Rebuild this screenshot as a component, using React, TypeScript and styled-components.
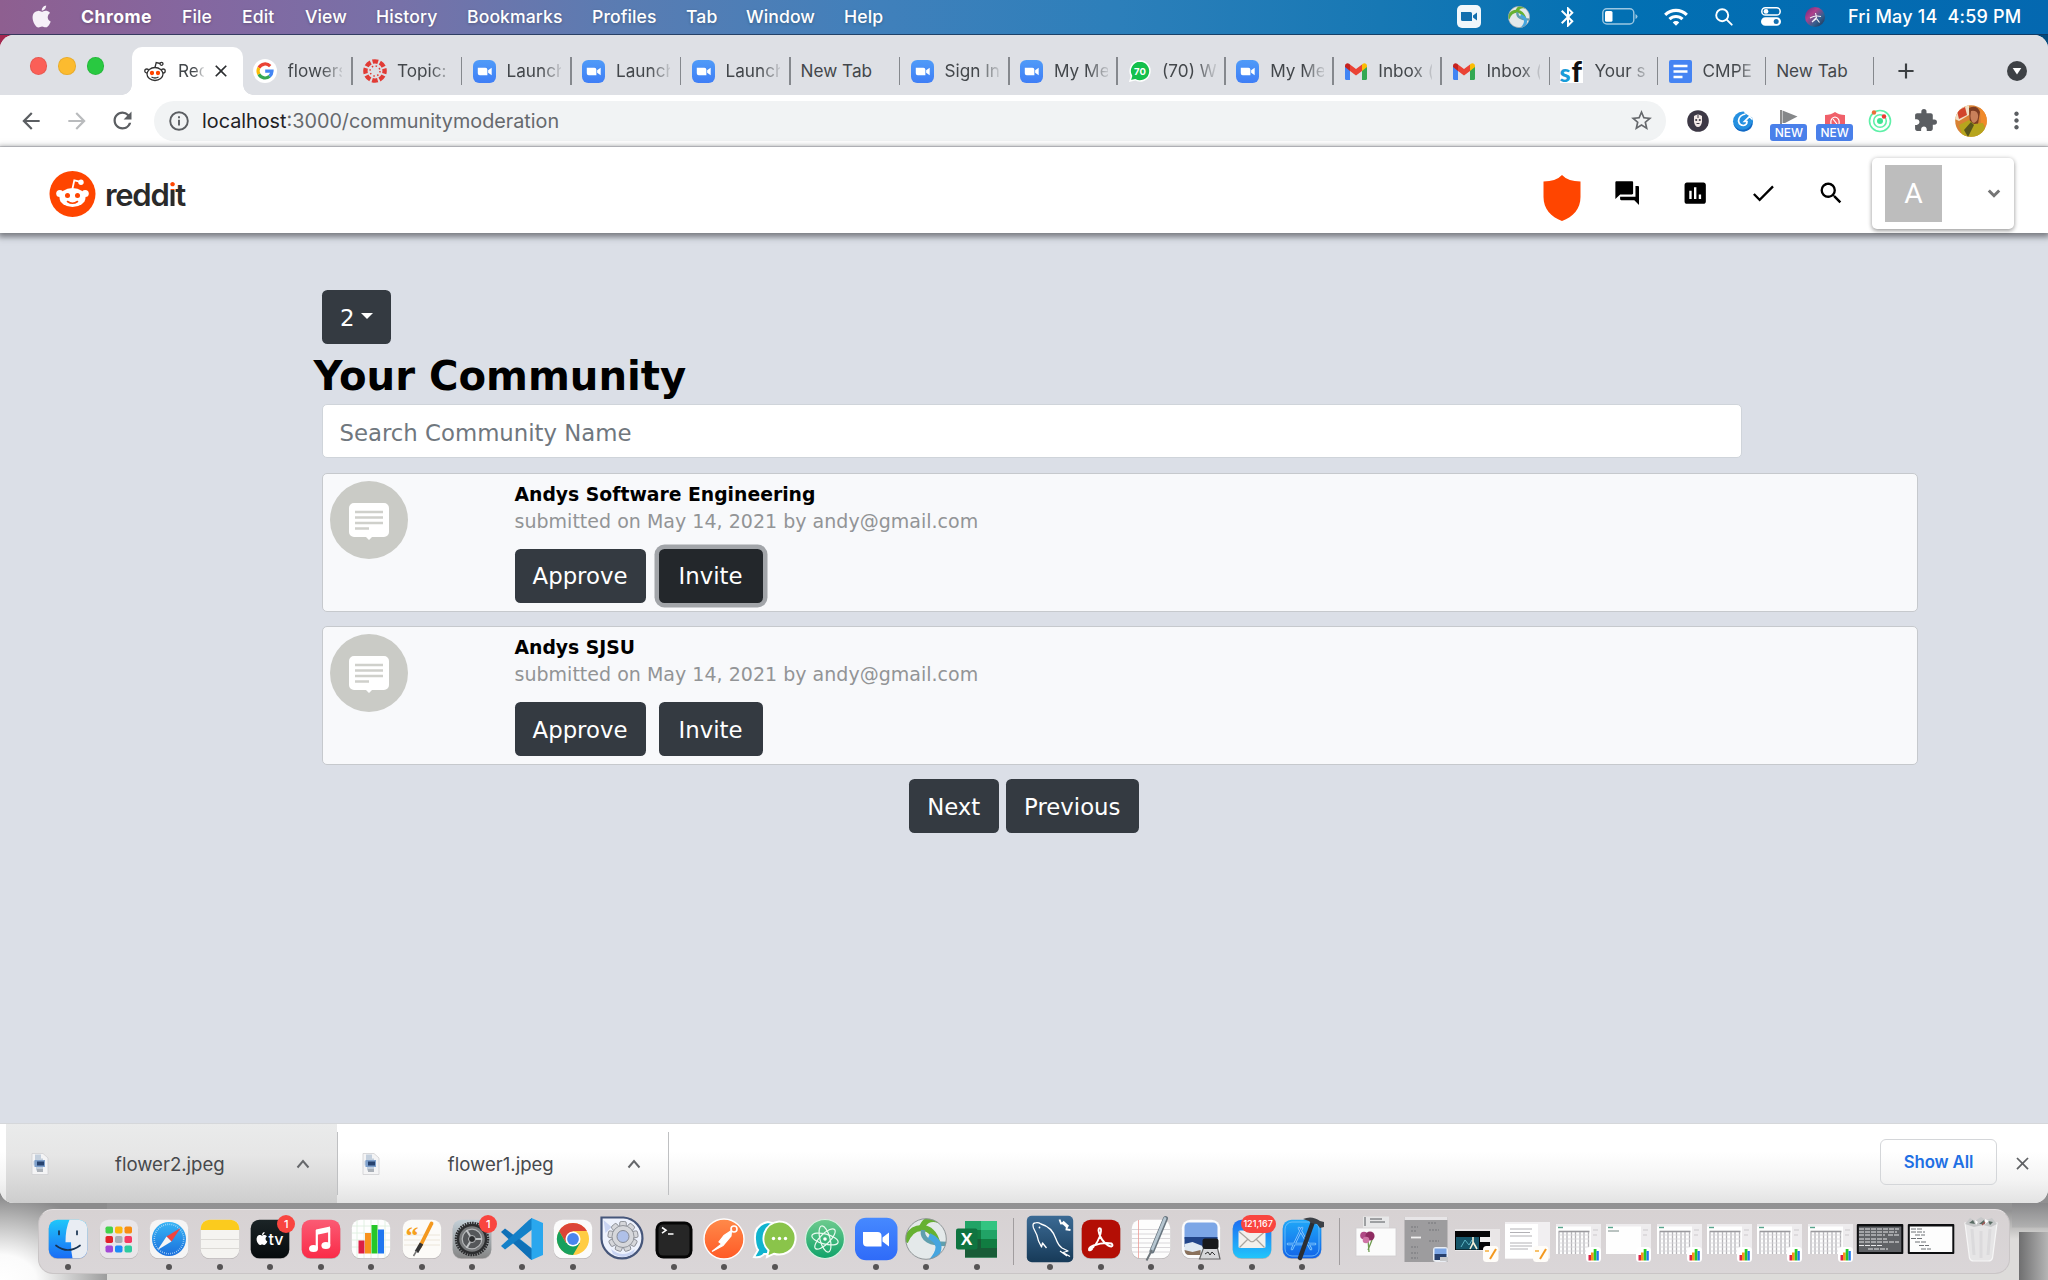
import React from "react";
import styled, { createGlobalStyle, css } from "styled-components";
import {
  MdQuestionAnswer,
  MdAssessment,
  MdCheck,
  MdSearch,
  MdArrowBack,
  MdArrowForward,
  MdRefresh,
  MdStarBorder,
  MdExtension,
  MdMoreVert,
  MdClose,
  MdAdd,
  MdBluetooth,
  MdWifi,
} from "react-icons/md";

const Global = createGlobalStyle`
  * { box-sizing: border-box; }
  body { margin: 0; overflow: hidden; }
  svg { display: block; flex: none; }
`;

const ui = `Inter, "Liberation Sans", sans-serif`;
const verdana = `Verdana, "DejaVu Sans", sans-serif`;

/* ---------- desktop ---------- */

const Desktop = styled.div`
  width: 2048px;
  height: 1280px;
  display: flex;
  flex-direction: column;
  isolation: isolate;
  font-family: ${ui};
  background:
    linear-gradient(90deg, #a3274f 0, #c02c58 300px, #2f4f74 420px, #0a5c92 1600px, #034a7c 100%) 0 0 / 100% 60px no-repeat,
    #969698;
`;

const MenuBar = styled.header`
  height: 35px;
  flex: none;
  display: flex;
  align-items: center;
  padding: 0 0 1px 30px;
  border-bottom: 1.5px solid rgba(20, 40, 70, 0.7);
  color: #fff;
  background: linear-gradient(90deg, #8e5f90 0, #8467a0 200px, #7771a8 400px, #5a7cb2 620px, #4080bb 880px, #2c7fba 1120px, #1778b4 1380px, #0270b3 1620px, #0468b0 2048px);
`;

const MenuItem = styled.span<{ $w: number; $bold?: boolean }>`
  width: ${(p) => p.$w}px;
  font-size: 17.6px;
  font-weight: ${(p) => (p.$bold ? 700 : 500)};
  letter-spacing: ${(p) => (p.$bold ? 0.5 : 0.1)}px;
  white-space: nowrap;
  text-shadow: 0 1px 3px rgba(0, 0, 0, 0.25);
`;

const Extras = styled.div`
  margin-left: auto;
  display: flex;
  align-items: center;
`;

const Slot = styled.span<{ $w: number }>`
  width: ${(p) => p.$w}px;
  flex: none;
  display: flex;
  justify-content: center;
  align-items: center;
`;

const Clock = styled.span`
  width: 217px;
  padding-left: 17px;
  font-size: 18px;
  font-weight: 500;
  letter-spacing: 0.2px;
  white-space: pre;
`;

/* ---------- browser ---------- */

const Window = styled.section`
  height: 1168px;
  flex: none;
  display: flex;
  flex-direction: column;
  border-radius: 14px;
  overflow: hidden;
  background: #fff;
`;

const TabStrip = styled.div`
  height: 60px;
  flex: none;
  display: flex;
  align-items: flex-end;
  background: #dee0e5;
`;

const Lights = styled.div`
  width: 132px;
  flex: none;
  height: 60px;
  padding: 2px 0 0 29.5px;
  display: flex;
  align-items: center;
  gap: 11.4px;
`;

const Light = styled.i<{ $c: string }>`
  width: 17.4px;
  height: 17.4px;
  border-radius: 50%;
  background: ${(p) => p.$c};
  box-shadow: inset 0 0 0 1px rgba(0, 0, 0, 0.08);
`;

const tabBase = css`
  height: 48px;
  flex: none;
  display: flex;
  align-items: center;
  font-size: 17.2px;
  color: #43474b;
`;

const ActiveTab = styled.div`
  ${tabBase}
  width: 111px;
  padding-left: 12px;
  background: #fff;
  border-radius: 10px 10px 0 0;
  position: relative;
  &::before,
  &::after {
    content: "";
    position: absolute;
    bottom: 0;
    width: 10px;
    height: 10px;
  }
  &::before {
    left: -10px;
    background: radial-gradient(circle at 0 0, transparent 9.5px, #fff 10px);
  }
  &::after {
    right: -10px;
    background: radial-gradient(circle at 100% 0, transparent 9.5px, #fff 10px);
  }
`;

const Tab = styled.div<{ $w: number }>`
  ${tabBase}
  width: ${(p) => p.$w}px;
  padding-left: 10px;
`;

const TabDivider = styled.i`
  width: 1.4px;
  height: 28px;
  margin-left: auto;
  background: #85888d;
`;

const TabTitle = styled.span<{ $w: number; $gap?: number; $fade?: boolean }>`
  width: ${(p) => p.$w}px;
  margin-left: ${(p) => p.$gap ?? 0}px;
  padding-bottom: 1px;
  overflow: hidden;
  white-space: nowrap;
  ${(p) =>
    p.$fade &&
    css`
      mask-image: linear-gradient(90deg, #000 62%, rgba(0, 0, 0, 0.15) 100%);
    `}
`;

const Toolbar = styled.div`
  height: 52px;
  flex: none;
  display: flex;
  align-items: center;
  padding-left: 8px;
  border-bottom: 1.4px solid #d9dbde;
  color: #5b5e62;
`;

const Omnibox = styled.div`
  width: 1512px;
  height: 40px;
  margin: 0 9px 0 9px;
  padding: 0 12px 0 15px;
  display: flex;
  align-items: center;
  border-radius: 20px;
  background: #f1f3f4;
  font-size: 19.8px;
  letter-spacing: 0;
  color: #66696d;
`;

const Host = styled.span`
  margin-left: 13px;
  color: #1f2124;
`;

const UrlPath = styled.span`
  flex: 1;
`;

const ExtStack = styled.span`
  height: 40px;
  display: flex;
  flex-direction: column;
  align-items: center;
  justify-content: flex-end;
`;

const NewBadge = styled.b`
  width: 37px;
  height: 17px;
  border-radius: 3px;
  background: #4a80ea;
  color: #fff;
  font-size: 12px;
  font-weight: 500;
  line-height: 18px;
  text-align: center;
`;

/* ---------- page ---------- */

const Page = styled.main`
  flex: 1;
  display: flex;
  flex-direction: column;
  background: #dbdfe7;
`;

const SiteHeader = styled.div`
  height: 86px;
  flex: none;
  display: flex;
  align-items: center;
  padding: 6px 34px 0 49px;
  background: #fff;
  box-shadow: 0 2px 6px 2px rgba(60, 62, 66, 0.62);
  z-index: 1;
`;

const Wordmark = styled.span`
  margin: 4px 0 0 9px;
  font-size: 31px;
  line-height: 38px;
  font-weight: 600;
  letter-spacing: -1.3px;
  color: #2a2a2a;
`;

const DottedI = styled.span`
  color: transparent;
  background: linear-gradient(#ff4500 38%, #2a2a2a 38%);
  background-clip: text;
  -webkit-background-clip: text;
`;

const HeaderIcons = styled.div`
  margin-left: auto;
  display: flex;
  align-items: center;
  color: #000;
`;

const ShieldSlot = styled(Slot)`
  padding-top: 9px;
`;

const Profile = styled.div`
  width: 142px;
  height: 71px;
  margin-left: 7px;
  padding: 0 13px 0 13px;
  display: flex;
  align-items: center;
  justify-content: space-between;
  border-radius: 5px;
  background: #fff;
  box-shadow: 0 2px 4px rgba(0, 0, 0, 0.32), 0 0 5px rgba(0, 0, 0, 0.14);
`;

const Initial = styled.span`
  width: 57px;
  height: 57px;
  display: grid;
  place-items: center;
  background: #bdbdbd;
  color: #fff;
  font: 400 28.4px Roboto, sans-serif;
`;

const Content = styled.div`
  flex: 1;
  display: flex;
  flex-direction: column;
  padding: 57px 130px 0 321.5px;
  font-family: ${verdana};
`;

const Button = styled.button<{ $w: number; $focus?: boolean }>`
  width: ${(p) => p.$w}px;
  height: 54px;
  padding: 1px 0 0;
  display: flex;
  align-items: center;
  justify-content: center;
  gap: 6px;
  border: 0;
  border-radius: 5.5px;
  background: ${(p) => (p.$focus ? "#23272b" : "#343a41")};
  box-shadow: ${(p) => (p.$focus ? "0 0 0 4.5px #a2a5a9" : "none")};
  color: #fff;
  font: 400 22.8px ${verdana};
`;

const Caret = styled.i`
  margin-top: -4px;
  border: 6.5px solid transparent;
  border-top-color: #fff;
  border-bottom: 0;
`;

const Heading = styled.h3`
  margin: 9px 0 5px -8px;
  font-size: 40.2px;
  line-height: 46px;
  font-weight: 700;
  color: #000;
`;

const SearchInput = styled.input`
  width: 1420px;
  height: 54px;
  flex: none;
  padding: 3px 16px 0 17px;
  border: 1.4px solid #cfd4da;
  border-radius: 5px;
  background: #fff;
  font: 400 22.8px ${verdana};
  &::placeholder {
    color: #70777e;
    opacity: 1;
  }
`;

const Card = styled.article`
  height: 139px;
  flex: none;
  margin-top: 14.5px;
  padding: 7px 0 0 7px;
  display: flex;
  border: 1.5px solid #c6c9cd;
  border-radius: 5px;
  background: #f8f9fb;
`;

const CardBody = styled.div`
  margin-left: 107px;
`;

const CardTitle = styled.div`
  height: 27px;
  line-height: 28px;
  font-size: 18.8px;
  font-weight: 700;
  color: #000;
`;

const CardMeta = styled.div`
  height: 27px;
  line-height: 26px;
  font-size: 19px;
  letter-spacing: 0.02px;
  color: #929496;
`;

const Actions = styled.div<{ $gap: number }>`
  margin-top: 14px;
  display: flex;
  gap: ${(p) => p.$gap}px;
`;

const Pager = styled.div`
  margin: 14px 0 0 587.5px;
  display: flex;
  gap: 7px;
`;

/* ---------- downloads ---------- */

const Shelf = styled.footer`
  height: 80px;
  flex: none;
  display: flex;
  align-items: center;
  padding-left: 6px;
  border-top: 1px solid #d5d7da;
  background: linear-gradient(#fff 0, #fff 35%, #f4f4f4 70%, #e3e3e3 100%);
`;

const Download = styled.div<{ $active?: boolean }>`
  width: 330.8px;
  height: 80px;
  padding: 0 27px 0 25px;
  display: flex;
  align-items: center;
  font-size: 18.6px;
  color: #47494c;
  background: ${(p) => (p.$active ? "linear-gradient(#eaebeb, #e6e6e6 40%, #cdcdcd)" : "none")};
`;

const FileName = styled.span<{ $inset: number }>`
  flex: 1;
  margin-left: ${(p) => p.$inset}px;
`;

const ShelfDivider = styled.i`
  width: 1.2px;
  height: 63px;
  margin-right: -1.2px;
  background: #bfc0c2;
`;

const ShowAll = styled.button`
  width: 117px;
  height: 46px;
  margin: -4px 13px 0 auto;
  padding: 0;
  border: 1.4px solid #d4d6d9;
  border-radius: 6px;
  background: transparent;
  color: #1f70e4;
  font: 600 16.8px ${ui};
  letter-spacing: -0.1px;
`;

/* ---------- dock ---------- */

const Under = styled.div`
  flex: 1;
  display: flex;
  align-items: flex-start;
  margin-top: -14px;
  padding: 20px 38px 0;
  position: relative;
  z-index: -1;
  background:
    linear-gradient(#88888a, #b0b0b0 24px, transparent 25px) 2012px 14px / 36px 30px no-repeat,
    linear-gradient(90deg, #6f6f70, #b5b5b5) 100% 100% / 29px 48px no-repeat,
    radial-gradient(120px 84px at 0 100%, #fff 0, #fbfbfb 30%, #b4b4b4 75%, #8b8b8c 100%) 0 0 / 107px 100% no-repeat,
    linear-gradient(#8d8d8f 0, #939394 22px, #dddcda 50px);
`;

const Dock = styled.nav`
  width: 1972px;
  height: 65px;
  flex: none;
  padding-left: 4px;
  display: flex;
  border-radius: 15px;
  border: 1px solid #c9c5c6;
  border-top-color: #e6e2e3;
  background: linear-gradient(#d7d2d3, #dad6d8);
`;

const DockItem = styled.div`
  width: 50.47px;
  flex: none;
  padding-top: 4.5px;
  display: flex;
  flex-direction: column;
  align-items: center;
  position: relative;
`;

const RunningDot = styled.i`
  width: 6px;
  height: 6px;
  margin-top: 1px;
  border-radius: 50%;
  background: #565455;
`;

const DockDivider = styled.i`
  width: 1.4px;
  flex: none;
  height: 47px;
  margin: 8px 10.5px 0 11px;
  background: #a19d9f;
`;

const Badge = styled.b<{ $wide?: boolean }>`
  position: absolute;
  top: 5px;
  right: ${(p) => (p.$wide ? 1.5 : 0)}px;
  width: ${(p) => (p.$wide ? 35 : 18)}px;
  height: 18px;
  border-radius: 9px;
  background: #f9453f;
  color: #fff;
  font-size: ${(p) => (p.$wide ? 9 : 11)}px;
  font-weight: 500;
  line-height: 18px;
  text-align: center;
`;

/* ---------- small drawings ---------- */

const ZoomMark = ({ size = 23 }: { size?: number }) => (
  <svg width={size} height={size} viewBox="0 0 24 24">
    <defs>
      <linearGradient id="zm" x1="0" y1="0" x2="0" y2="1">
        <stop offset="0" stopColor="#4f9bf8" />
        <stop offset="1" stopColor="#3f7ef6" />
      </linearGradient>
    </defs>
    <rect width="24" height="24" rx="6.5" fill="url(#zm)" />
    <path d="M5 8.2h8a2 2 0 0 1 2 2v5.600h-8a2 2 0 0 1-2-2zM15.800 10.800l3.700-2.600v7.600l-3.700-2.600z" fill="#fff" />
  </svg>
);

const GoogleG = () => (
  <svg width="24" height="24" viewBox="0 0 24 24">
    <circle cx="12" cy="12" r="12" fill="#fff" />
    <g fill="none" strokeWidth="3.200">
      <path d="M17.200 7.200A7 7 0 0 0 5.900 8.700" stroke="#ea4335" />
      <path d="M5.900 8.700a7 7 0 0 0 0 6.600" stroke="#fbbc05" />
      <path d="M5.900 15.300a7 7 0 0 0 10.700 2" stroke="#34a853" />
      <path d="M16.600 17.300A7 7 0 0 0 19 12.200h-6.800" stroke="#4285f4" />
    </g>
  </svg>
);

const Canvas = () => (
  <svg width="24" height="24" viewBox="0 0 24 24">
    <circle cx="12" cy="12" r="9.600" fill="none" stroke="#e13b35" strokeWidth="4.400" strokeDasharray="5.600 1.940" strokeDashoffset="2.800" />
    <circle cx="12" cy="12" r="5" fill="none" stroke="#e13b35" strokeWidth="1.500" strokeDasharray="1.500 2.430" />
  </svg>
);

const WhatsApp = () => (
  <svg width="22" height="22" viewBox="0 0 22 22">
    <path d="M11 1a10 10 0 1 1-5 18.700L1 21l1.500-5A10 10 0 0 1 11 1z" fill="#14c04c" stroke="#fff" strokeWidth="1.500" />
    <text x="11" y="14.500" fontSize="9.500" fontWeight="700" fill="#fff" textAnchor="middle" fontFamily="Inter">70</text>
  </svg>
);

const Gmail = () => (
  <svg width="22" height="17" viewBox="0 0 22 17">
    <path d="M0 3v12.500A1.500 1.500 0 0 0 1.500 17H5V7z" fill="#4285f4" />
    <path d="M22 3v12.500a1.500 1.500 0 0 1-1.500 1.500H17V7z" fill="#34a853" />
    <path d="M5 1.500L11 6l6-4.500V8l-6 4.500L5 8z" fill="#ea4335" />
    <path d="M0 3c0-2.500 2.500-3.500 4.200-2.200L5 1.500V8L0 4z" fill="#c5221f" />
    <path d="M22 3c0-2.500-2.500-3.500-4.200-2.200L17 1.500V8l5-4z" fill="#fbbc04" />
  </svg>
);

const SfMark = () => (
  <svg width="23" height="23" viewBox="0 0 23 23">
    <rect width="23" height="23" fill="#fff" />
    <text x="-0.500" y="22" fontFamily="Lato" fontWeight="900" fontSize="25" fill="#1a9cd8">s</text>
    <text x="11.500" y="22" fontFamily="Lato" fontWeight="900" fontSize="29" fill="#111">f</text>
  </svg>
);

const DocsMark = () => (
  <svg width="23" height="23" viewBox="0 0 23 23">
    <rect width="23" height="23" rx="2" fill="#4584f3" />
    <path d="M4.500 6h14M4.500 11.500h14M4.500 17h9" stroke="#fff" strokeWidth="2.600" />
  </svg>
);

const SnooTab = () => (
  <svg width="22" height="22" viewBox="0 0 22 22" fill="none" stroke="#333" strokeWidth="1.300">
    <path d="M11 7.500l1.200-5 4 1" />
    <circle cx="17.500" cy="3.800" r="1.500" />
    <circle cx="2.800" cy="11" r="2" />
    <circle cx="19.200" cy="11" r="2" />
    <ellipse cx="11" cy="14" rx="8" ry="6.500" fill="#fff" />
    <circle cx="8" cy="13" r="1.500" fill="#ff4500" stroke="#ff4500" />
    <circle cx="14" cy="13" r="1.500" fill="#ff4500" stroke="#ff4500" />
    <path d="M7.500 17q3.500 2 7 0" />
  </svg>
);

const RedditLogo = () => (
  <svg width="47" height="48" viewBox="0 0 47 48">
    <circle cx="23.500" cy="25" r="23" fill="#ff4500" />
    <g fill="#fff">
      <ellipse cx="23.500" cy="28.500" rx="13" ry="9.500" />
      <circle cx="10.800" cy="24.500" r="3.600" />
      <circle cx="36.200" cy="24.500" r="3.600" />
      <circle cx="32" cy="13.300" r="2.700" />
      <path d="M23.500 19.500l1.800-8.200 6.500 1.600" fill="none" stroke="#fff" strokeWidth="1.800" />
    </g>
    <circle cx="18.500" cy="26.500" r="2.500" fill="#ff4500" />
    <circle cx="28.500" cy="26.500" r="2.500" fill="#ff4500" />
    <path d="M18.500 32.500q5 3.600 10 0" fill="none" stroke="#ff4500" strokeWidth="1.600" strokeLinecap="round" />
  </svg>
);

const Shield = () => (
  <svg width="38" height="46" viewBox="0 0 38 46">
    <path d="M19 0Q25 6.500 37.500 6.500V22C37.500 34 30 42 19 46 8 42 .5 34 .5 22V6.500Q13 6.500 19 0z" fill="#ff4500" />
  </svg>
);

const InfoMark = () => (
  <svg width="20" height="20" viewBox="0 0 20 20" fill="none" stroke="#5b5e62" strokeWidth="1.900">
    <circle cx="10" cy="10" r="8.800" />
    <path d="M10 8.800v5.700M10 5.300v2" />
  </svg>
);

const Chevron = () => (
  <svg width="14" height="10" viewBox="0 0 14 10">
    <path d="M1.500 8.500L7 2l5.500 6.500" fill="none" stroke="#66686b" strokeWidth="2" />
  </svg>
);

const ProfileArrow = () => (
  <svg width="14" height="9" viewBox="0 0 14 9">
    <path d="M1.800 1.500L7 6.700l5.200-5.200" fill="none" stroke="#757575" strokeWidth="3" />
  </svg>
);

const JpegFile = () => (
  <svg width="18" height="22" viewBox="0 0 18 22">
    <path d="M1 .5h11l5 4.500v16.500H1z" fill="#f4f4f5" stroke="#cfcfd2" strokeWidth=".8" />
    <path d="M4 1.500h6v4h2v12H5v-5H2.500V8H4z" fill="#c3cfdd" />
    <rect x="3.500" y="7" width="10.500" height="7" fill="#7ea0cc" />
    <rect x="6" y="8.500" width="7" height="4" fill="#27436f" />
    <path d="M6 16h6v3H6z" fill="#aab0b8" />
  </svg>
);

const CommunityAvatar = () => (
  <svg width="78" height="78" viewBox="0 0 78 78">
    <circle cx="39" cy="39" r="39" fill="#cacbc6" />
    <path d="M24 22h30a5 5 0 0 1 5 5v24a5 5 0 0 1-5 5H42l-3 3-3-3H24a5 5 0 0 1-5-5V27a5 5 0 0 1 5-5z" fill="#fff" />
    <path d="M25 31h28M25 36.500h28M25 42h28M25 47.500h14" stroke="#cfd0cb" strokeWidth="2.400" />
  </svg>
);

const CameraExtra = () => (
  <svg width="24" height="23" viewBox="0 0 24 23">
    <rect width="24" height="23" rx="5" fill="#f1f7fb" />
    <path d="M4 7h9.500a1.500 1.500 0 0 1 1.500 1.500V16H5.500A1.500 1.500 0 0 1 4 14.500zM16 10.500l4-3v8l-4-3z" fill="#136fae" />
  </svg>
);

const Swirl = ({ size = 22 }: { size?: number }) => (
  <svg width={size} height={size} viewBox="0 0 42 42">
    <defs>
      <clipPath id="swc"><circle cx="21" cy="21" r="20.500" /></clipPath>
    </defs>
    <circle cx="21" cy="21" r="20.500" fill="#e4e9ea" />
    <g clipPath="url(#swc)" fill="none">
      <path d="M0 24Q6 9 18 10q10 1 14 14" stroke="#66b132" strokeWidth="6" />
      <path d="M16 12Q20-2 34 2" stroke="#66b132" strokeWidth="6" />
      <path d="M18 12q-2 14 24 14" stroke="#5f9fae" strokeWidth="4.500" />
      <path d="M24 18q18 8 2 26" stroke="#45a5df" strokeWidth="6" />
    </g>
    <circle cx="21" cy="21" r="20.300" fill="none" stroke="#8f9496" strokeWidth="1" />
  </svg>
);

const Battery = () => (
  <svg width="36" height="17" viewBox="0 0 36 17">
    <rect x=".8" y=".8" width="31" height="15.200" rx="4" fill="none" stroke="#9cc7e2" strokeWidth="1.400" />
    <rect x="3" y="3" width="7.500" height="10.800" rx="1.500" fill="#fff" />
    <path d="M33.500 6v5q2-1 2-2.500T33.500 6z" fill="#9cc7e2" />
  </svg>
);

const SearchExtra = () => (
  <svg width="18" height="18" viewBox="0 0 18 18" fill="none" stroke="#fff" strokeWidth="1.900" strokeLinecap="round">
    <circle cx="7.200" cy="7.200" r="6" />
    <path d="M11.700 11.700l5 5" />
  </svg>
);

const ControlCenter = () => (
  <svg width="20" height="19" viewBox="0 0 20 19">
    <rect x=".8" y=".8" width="18.400" height="7.200" rx="3.600" fill="none" stroke="#fff" strokeWidth="1.500" />
    <circle cx="5" cy="4.400" r="2.400" fill="#fff" />
    <rect y="10.200" width="20" height="8.600" rx="4.300" fill="#fff" />
    <circle cx="15.200" cy="14.500" r="2.500" fill="#1470b0" />
  </svg>
);

const Siri = () => (
  <svg width="20" height="20" viewBox="0 0 20 20">
    <defs>
      <linearGradient id="siri" x1="0" y1="0" x2="1" y2="1">
        <stop offset="0" stopColor="#5a2a80" />
        <stop offset=".35" stopColor="#b0408c" />
        <stop offset=".65" stopColor="#35608f" />
        <stop offset="1" stopColor="#1d2a4a" />
      </linearGradient>
    </defs>
    <circle cx="10" cy="10" r="10" fill="url(#siri)" />
    <path d="M5 11q5-3 11-1.500M10.500 6l1 4.500L7 15l4.500-3.500 3 4" stroke="#fff" strokeWidth="1.100" fill="none" opacity=".9" />
  </svg>
);

const ApplePath = "M17 12.700c0-2.700 2.200-4 2.300-4.100-1.300-1.800-3.200-2.100-3.900-2.100-1.700-.2-3.200 1-4.100 1-.8 0-2.100-1-3.500-.900-1.800 0-3.400 1-4.400 2.600-1.900 3.200-.5 8 1.300 10.600.9 1.300 2 2.700 3.400 2.700 1.400-.1 1.900-.9 3.500-.9s2.100.9 3.500.800c1.500 0 2.400-1.300 3.300-2.600 1-1.500 1.500-2.900 1.500-3-.1 0-2.900-1.100-2.900-4.100zM14.400 4.800c.7-.9 1.200-2.100 1.100-3.300-1.100 0-2.400.7-3.100 1.600-.7.800-1.300 2-1.100 3.200 1.200.1 2.400-.6 3.100-1.500z";

const AppleMark = () => (
  <svg width="25" height="25" viewBox="0 0 24 24" fill="#f6f0f8">
    <path d={ApplePath} />
  </svg>
);

const StripMenu = () => (
  <svg width="20" height="20" viewBox="0 0 20 20">
    <circle cx="10" cy="10" r="10" fill="#3e4145" />
    <path d="M5.700 7h8.600L10 13.500z" fill="#fff" />
  </svg>
);

const MaskExt = () => (
  <svg width="22" height="22" viewBox="0 0 22 22">
    <circle cx="11" cy="11" r="10.800" fill="#3d3845" />
    <path d="M7 6q4-3 8 0v6q-1 5-4 5t-4-5z" fill="#f3e9e6" />
    <circle cx="9.200" cy="10" r="1.100" fill="#3d3845" />
    <circle cx="12.800" cy="10" r="1.100" fill="#3d3845" />
    <path d="M9.500 13.500h3M11 5v3" stroke="#3d3845" strokeWidth="1" />
  </svg>
);

const WaveExt = () => (
  <svg width="22" height="22" viewBox="0 0 22 22">
    <circle cx="11" cy="11.500" r="10" fill="#2590e0" />
    <path d="M12 0l10 0v8l-4-1.500L12.500 3z" fill="#fff" />
    <path d="M1.500 14q5 8 13 5 5-3 6-8 1 9-8 10.500Q4 22 1.500 14z" fill="#1468c4" />
    <path d="M13.500 4Q7 5 6.500 11q1 4.500 5 4.500 3.500-.5 3.500-4h-2.500l5-5 3 3" fill="none" stroke="#fff" strokeWidth="1.700" />
  </svg>
);

const PlayExt = () => (
  <svg width="18" height="15" viewBox="0 0 18 15">
    <path d="M1 1v14" stroke="#666" strokeWidth="1.500" />
    <path d="M2.500 1.500L17.500 7.500 5 14h-2.500z" fill="#858789" />
  </svg>
);

const HexExt = () => (
  <svg width="20" height="12" viewBox="0 0 20 12">
    <path d="M0 3Q6 3 10 0q4 3 10 3v9H0z" fill="#f0606a" />
    <path d="M6 12q-1-6 4-7 5 1 4 7M8 7l4 5" stroke="#fff" strokeWidth="1.200" fill="none" />
  </svg>
);

const OrbitExt = () => (
  <svg width="24" height="24" viewBox="0 0 24 24">
    <circle cx="12" cy="12" r="10.500" fill="none" stroke="#5ff0a8" strokeWidth="1.600" />
    <circle cx="12" cy="12" r="6.300" fill="none" stroke="#5ff0a8" strokeWidth="1.600" />
    <circle cx="12" cy="12" r="3" fill="#3fe493" />
    <circle cx="6" cy="3.500" r="2.200" fill="#e8703a" />
    <circle cx="16" cy="7.500" r="2.200" fill="#ee3a34" />
  </svg>
);

const Portrait = () => (
  <svg width="32" height="32" viewBox="0 0 32 32">
    <defs><clipPath id="por"><circle cx="16" cy="16" r="15.800" /></clipPath></defs>
    <g clipPath="url(#por)">
      <rect width="32" height="32" fill="#d98234" />
      <path d="M0 0h14v10L4 16 0 14z" fill="#f1dfc4" />
      <path d="M2 6l8-4 2 8-8 4z" fill="#d2452b" />
      <path d="M14 3q8-4 11 4l-2 12H15z" fill="#7d3c22" />
      <path d="M16 6q6-1 7 4t-4 8q-5-2-3-12z" fill="#c9805a" />
      <path d="M25 2h7v20l-6-4z" fill="#f08a2a" />
      <path d="M4 20l10-5 5 4 9-1 3 8-10 7H8z" fill="#b7a51d" />
      <path d="M9 25l7-8 3 3-6 12z" fill="#59561c" />
    </g>
  </svg>
);

/* ---------- dock drawings: every icon sits on a 48 unit canvas ---------- */

const Tile = ({ fill, children }: { fill: string; children?: React.ReactNode }) => (
  <svg width="48" height="48" viewBox="0 0 48 48">
    <rect x="4.700" y="5.400" width="38.600" height="38.600" rx="8.800" fill="#000" opacity=".16" />
    <rect x="4.700" y="4.700" width="38.600" height="38.600" rx="8.800" fill={fill} />
    {children}
  </svg>
);

const Free = ({ children }: { children: React.ReactNode }) => (
  <svg width="48" height="48" viewBox="0 0 48 48">{children}</svg>
);

const Paints = () => (
  <svg width="0" height="0">
    <defs>
      {[
        ["gFinder", "#1fc7fa", "#1a6cf6"],
        ["gSafari", "#35b4f5", "#1b6fdc"],
        ["gMusic", "#fb5b74", "#fa2b48"],
        ["gTv", "#1b2426", "#060b0d"],
        ["gPostman", "#ff8a4a", "#ff5a26"],
        ["gAtom", "#6ecb8e", "#10a36a"],
        ["gZoom", "#4689ff", "#2f6bf8"],
        ["gSql", "#3b6a94", "#173a58"],
        ["gMail", "#1c6df2", "#22c6fb"],
        ["gXcode", "#1fa8f8", "#1263e8"],
        ["gGear", "#c4d0d8", "#858585"],
      ].map(([id, a, b]) => (
        <linearGradient key={id} id={id} x1="0" y1="0" x2="0" y2="1">
          <stop offset="0" stopColor={a} />
          <stop offset="1" stopColor={b} />
        </linearGradient>
      ))}
    </defs>
  </svg>
);

const Finder = () => (
  <Tile fill="url(#gFinder)">
    <path d="M25.500 4.700h9a8.800 8.800 0 0 1 8.800 8.800v21a8.800 8.800 0 0 1-8.800 8.800h-6q-1.600-7-1.500-16h-5.500q0-14 4-22.600z" fill="#e9edf3" />
    <path d="M12 30.500q12 9 24 0M15 16v3.500M33 16v3.500" fill="none" stroke="#17324f" strokeWidth="1.700" strokeLinecap="round" />
  </Tile>
);

const padColors = ["#44d04a", "#fbb60c", "#f78c12", "#e3202a", "#a9adb4", "#f53a63", "#a348d6", "#1d8cf8", "#2ecba0"];
const Launchpad = () => (
  <Tile fill="#e9e6e9">
    {padColors.map((c, i) => (
      <rect key={c} x={10.500 + (i % 3) * 9.500} y={11.500 + Math.floor(i / 3) * 9.500} width="7.500" height="7" rx="1.700" fill={c} />
    ))}
  </Tile>
);

const Safari = () => (
  <Tile fill="#f5f5f5">
    <circle cx="24" cy="24" r="17" fill="url(#gSafari)" />
    <circle cx="24" cy="24" r="14.700" fill="none" stroke="#bfe0fa" strokeWidth="1.600" strokeDasharray=".7 1.400" />
    <path d="M35.500 13L21.500 21.500l5 5z" fill="#f0443f" />
    <path d="M12.500 35L21.500 21.500l5 5z" fill="#f5f5f5" />
  </Tile>
);

const Notes = () => (
  <Tile fill="#f5f4f1">
    <path d="M4.700 15v-1.500a8.800 8.800 0 0 1 8.800-8.800h21a8.800 8.800 0 0 1 8.800 8.800V15z" fill="#fbcb1e" />
    <path d="M4.700 24.500h38.600M4.700 33.500h38.600" stroke="#dcdad6" />
  </Tile>
);

const Tv = () => (
  <Tile fill="url(#gTv)">
    <g transform="translate(9 16) scale(.62)" fill="#fff"><path d={ApplePath} /></g>
    <text x="22.500" y="30" fontFamily="Inter" fontWeight="500" fontSize="16" fill="#fff">tv</text>
  </Tile>
);

const Music = () => (
  <Tile fill="url(#gMusic)">
    <path d="M19 14.500l14-3v5.500l-14 3z" fill="#fff" />
    <path d="M19.800 15v18M32.200 13v17" stroke="#fff" strokeWidth="2.200" />
    <ellipse cx="16.500" cy="33.500" rx="4.500" ry="3.600" fill="#fff" />
    <ellipse cx="28.900" cy="30.500" rx="4.500" ry="3.600" fill="#fff" />
  </Tile>
);

const Numbers = () => (
  <Tile fill="#fefefe">
    <path d="M10 5v38M17 5v38M24 5v38M31 5v38M38 5v38M5 11h38M5 18h38M5 25h38M5 32h38" stroke="#dcefdd" strokeWidth=".8" />
    <rect x="11.500" y="25.500" width="6" height="13" fill="#dc1f44" />
    <rect x="18" y="18" width="6" height="20.500" fill="#f8921c" />
    <rect x="24.500" y="10" width="6" height="28.500" fill="#25c728" />
    <rect x="31" y="14.500" width="6" height="24" fill="#1f76f0" />
  </Tile>
);

const Pages = () => (
  <Tile fill="#fcfbf8">
    <path d="M6 20h36M6 25h36M6 30h36" stroke="#ece6da" />
    <text x="7.500" y="29" fontFamily="Liberation Serif" fontWeight="700" fontSize="26" fill="#f5a11d">“</text>
    <path d="M33.500 8.500L22 31.500" stroke="#f3981f" strokeWidth="3.800" strokeLinecap="round" />
    <path d="M23.500 28.500L18.500 37" stroke="#333" strokeWidth="4" />
    <path d="M18.500 36l-3 5" stroke="#777" strokeWidth="1.500" />
  </Tile>
);

const Settings = () => (
  <Tile fill="url(#gGear)">
    <circle cx="24" cy="24" r="16" fill="none" stroke="#2c2d2f" strokeWidth="2.500" strokeDasharray="1.600 .9" />
    <circle cx="24" cy="24" r="14" fill="#77797b" stroke="#2c2d2f" strokeWidth="2.400" />
    <circle cx="24" cy="24" r="9.800" fill="#55575a" stroke="#b6b8ba" strokeWidth="1.200" />
    <path d="M24 24h10M24 24l-5.500-9M24 24l-5.500 9" stroke="#c0c2c4" strokeWidth="2" />
    <circle cx="24" cy="24" r="3.500" fill="#2c2d2f" stroke="#b6b8ba" />
  </Tile>
);

const VsCode = () => (
  <Free>
    <path d="M34 3L11 24l23 21V33.500L22 24l12-9.500z" fill="#1789cf" />
    <path d="M3 17l4-3.500L34 34v11l-2-1z" fill="#0f70b7" />
    <path d="M3 31l4 3.500L34 14V3l-3 2z" fill="#1380c8" />
    <path d="M33.500 3L45 8v32l-11.500 5z" fill="#2aa7ee" />
  </Free>
);

const Chrome = () => (
  <Tile fill="#fbfbfb">
    <circle cx="24" cy="24" r="16" fill="#fc4" />
    <path d="M24 16h13.900A16 16 0 0 0 10.100 16l7 12z" fill="#dc4437" />
    <path d="M10.100 16A16 16 0 0 0 24 40l7-12-14 0z" fill="#17a05d" />
    <circle cx="24" cy="24" r="7.500" fill="#fff" />
    <circle cx="24" cy="24" r="5.900" fill="#4a86ee" />
  </Tile>
);

const gearTeeth = [0, 40, 80, 120, 160, 200, 240, 280, 320];
const Gearbox = () => (
  <Free>
    <path d="M2.500 2.500h22A20.500 20.500 0 1 1 2.500 24z" fill="#eef2fd" stroke="#46567a" strokeWidth="2.200" />
    <path d="M4.500 5l8 7-6 6zM12 34q12 10 24 0l-2 5q-10 6-20 0z" fill="#c9d4f3" />
    {gearTeeth.map((a) => (
      <rect key={a} x="20.700" y="6.500" width="6.600" height="8" rx="1.500" fill="#d6d7db" stroke="#8a8d94" strokeWidth=".9" transform={`rotate(${a} 24 21.500)`} />
    ))}
    <circle cx="24" cy="21.500" r="11" fill="#d6d7db" stroke="#8a8d94" strokeWidth=".9" />
    <circle cx="24" cy="21.500" r="6" fill="#afc0e8" stroke="#858a96" />
  </Free>
);

const Terminal = () => (
  <Free>
    <rect x="5.500" y="6.500" width="37" height="37" rx="8" fill="#050505" />
    <rect x="8.500" y="9.500" width="31" height="31" rx="4.500" fill="#262626" />
    <path d="M12 12.500l4 2.800-4 2.800M18 19h5.500" fill="none" stroke="#fff" strokeWidth="1.600" />
  </Free>
);

const Postman = () => (
  <Free>
    <circle cx="24" cy="24" r="20" fill="url(#gPostman)" stroke="#fff" strokeWidth="1.400" />
    <circle cx="34" cy="14" r="3" fill="#ff7a42" stroke="#fff" strokeWidth="1.600" />
    <path d="M31.500 15.500L24 20.500l-5 6.500 2 1.500 8-8-8 9-9 7 11-6 8-9.500z" fill="#fff" stroke="#fff" strokeWidth="1.200" />
  </Free>
);

const Messages = () => (
  <Free>
    <path d="M17 7Q3 10 4 24q.5 8 3 11l-4 7q7 1 10-3h8V8z" fill="#10b4cf" stroke="#fff" strokeWidth="2" />
    <path d="M28 6.500a16.500 16.500 0 1 1-5 32.200L16 42l1.500-6.500A17 17 0 0 1 28 6.500z" fill="#8ac44a" stroke="#fff" strokeWidth="2" />
    <circle cx="22.500" cy="23.500" r="1.700" fill="#fff" />
    <circle cx="28.500" cy="23.500" r="1.700" fill="#fff" />
    <circle cx="34.500" cy="23.500" r="1.700" fill="#fff" />
  </Free>
);

const Atom = () => (
  <Free>
    <circle cx="24" cy="24" r="19.500" fill="url(#gAtom)" stroke="#d6f0df" strokeWidth="1.200" />
    <g fill="none" stroke="#e9faef" strokeWidth="1.200">
      <ellipse cx="24" cy="24" rx="13.500" ry="5" transform="rotate(15 24 24)" />
      <ellipse cx="24" cy="24" rx="13.500" ry="5" transform="rotate(75 24 24)" />
      <ellipse cx="24" cy="24" rx="13.500" ry="5" transform="rotate(135 24 24)" />
    </g>
    <circle cx="24" cy="24" r="1.800" fill="#fff" />
  </Free>
);

const ZoomApp = () => (
  <Free>
    <rect x="3" y="2.800" width="42.500" height="42.500" rx="11" fill="url(#gZoom)" />
    <path d="M11 17h14.500a4 4 0 0 1 4 4v10.500H15a4 4 0 0 1-4-4zM30.500 22.500l6.500-5v14l-6.500-5z" fill="#fff" />
  </Free>
);

const Excel = () => (
  <Free>
    <path d="M12 6h32v36.500H12z" fill="#1f9d5c" />
    <path d="M28 6h16v9H28z" fill="#32c481" />
    <path d="M12 6h16v9H12z" fill="#21a366" />
    <path d="M28 15h16v9H28z" fill="#21a366" />
    <path d="M12 15h16v9H12z" fill="#107c41" />
    <path d="M28 24h16v9H28z" fill="#107c41" />
    <path d="M12 24h16v18.500H12zM28 33h16v9.500H28z" fill="#185c37" />
    <rect x="3" y="13.500" width="21.500" height="21" rx="2" fill="#0f7440" />
    <text x="13.500" y="30" fontFamily="Lato" fontWeight="900" fontSize="16.500" fill="#fff" textAnchor="middle">X</text>
  </Free>
);

const MySql = () => (
  <Free>
    <rect x=".8" y=".8" width="46.400" height="46.400" rx="5" fill="url(#gSql)" />
    <path d="M7.500 13Q6 8 9 8q3-1 6 1 11 3 15 15 2 6 6 9l6 3-5 1.500 7 4M7.500 13q4 7 5 13l3 6 1-4 4 5M34 36l7 5" fill="none" stroke="#fff" strokeWidth="1.300" strokeLinejoin="round" />
    <circle cx="13.500" cy="12.500" r=".9" fill="#fff" />
    <path d="M36.500 7l5.500 5" stroke="#fff" strokeWidth="3.200" />
    <path d="M33.500 4.500l1.500 4 4-.5M41 11l-.5 3.500 4 .5" stroke="#fff" strokeWidth="1.900" fill="none" />
  </Free>
);

const Acrobat = () => (
  <Tile fill="#b30e05">
    <path d="M13 35q6-4 9.500-13 2.500-7 1-8.500-2-1-2 2 1 7 6 12 4 4 7 4 2-1 0-3-8-1.500-18 2-5 2-4.500 4.500 1 1 3-1z" fill="none" stroke="#fff" strokeWidth="1.900" strokeLinejoin="round" />
  </Tile>
);

const TextEdit = () => (
  <Tile fill="#fdfdfd">
    <path d="M5 14.500h38M5 19h38M5 23.500h38M5 28h38M5 32.500h38M5 37h38" stroke="#d5d3d6" strokeWidth=".9" />
    <path d="M11.500 5v38" stroke="#ee9a96" strokeWidth=".8" />
    <path d="M38.500 3.500L25 36" stroke="#697680" strokeWidth="5" strokeLinecap="round" />
    <path d="M38 3.500L25 35" stroke="#b6c6d1" strokeWidth="2.800" strokeLinecap="round" />
    <path d="M25 35l-5.500 10.500" stroke="#6e767c" strokeWidth="2" />
  </Tile>
);

const Preview = () => (
  <Tile fill="#fbfbfc">
    <path d="M7.500 12a4.500 4.500 0 0 1 4.500-4.500h24a4.500 4.500 0 0 1 4.500 4.500v12h-33z" fill="#7ca6e6" />
    <path d="M7.500 22h33v10h-33z" fill="#22468a" />
    <path d="M7.500 29l8-2 10 4v9H12a4.500 4.500 0 0 1-4.500-4.500z" fill="#dfe9f2" />
    <path d="M7.500 35l8 2 8-2v5H12q-4 0-4.500-5z" fill="#8a715c" />
    <path d="M26.500 33h14l2.500 11H22.500z" fill="#d7d8da" stroke="#666" strokeWidth="1.200" />
    <path d="M28 39l3-2 2 3 2-3 3 3" stroke="#333" fill="none" />
    <rect x="25.500" y="23.500" width="16" height="10.500" rx="2.500" fill="#18191b" />
  </Tile>
);

const Mail = () => (
  <Tile fill="url(#gMail)">
    <rect x="10.500" y="15.500" width="27" height="17.500" rx="1.500" fill="#f2f0ec" />
    <path d="M11 16.500l11 9.500q2 1.500 4 0l11-9.500M11.500 32.500l8-8M36.500 32.500l-8-8" fill="none" stroke="#a9a59f" strokeWidth="1.200" />
  </Tile>
);

const Xcode = () => (
  <Tile fill="url(#gXcode)">
    <rect x="7" y="7" width="34" height="34" rx="7" fill="none" stroke="#7cc6fb" strokeWidth=".8" />
    <path d="M24 13L14 34M21 13l12 21M10 29h27" fill="none" stroke="#86c9fc" strokeWidth="2.600" strokeLinecap="round" />
    <path d="M24 13L14 34M21 13l12 21M10 29h27" fill="none" stroke="#1b7ef0" strokeWidth="1" strokeLinecap="round" />
    <path d="M34.500 8L22 43" stroke="#2b2e33" strokeWidth="4.400" strokeLinecap="round" />
    <path d="M25 4q9-4 17 2l4 1v5l-4 1-3-4q-6 0-8-3z" fill="#3c4046" />
  </Tile>
);

const NumbersTag = () => (
  <g>
    <rect x="32" y="32" width="15" height="15" rx="3.500" fill="#fff" />
    <path d="M34.500 40h2.500v5.500h-2.500z" fill="#dc1f44" />
    <path d="M37 37.500h2.700v8H37z" fill="#f8921c" />
    <path d="M39.700 34h2.800v11.500h-2.800z" fill="#25c728" />
    <path d="M42.500 36h2.300v9.500h-2.300z" fill="#1f76f0" />
  </g>
);

const PagesTag = () => (
  <g>
    <rect x="30" y="31" width="15.500" height="16" rx="3.500" fill="#fffdf9" />
    <path d="M43 34l-6 10" stroke="#f3981f" strokeWidth="2" />
    <path d="M33 35v2M35 35v2" stroke="#f5a11d" strokeWidth="1.300" />
  </g>
);

const FlowerThumb = () => (
  <Free>
    <rect x="11" y="1.500" width="26" height="12" fill="#e7e7e8" />
    <path d="M13 2v9M18 4h12M18 7h15" stroke="#55585c" />
    <rect x="4" y="13" width="40" height="28" fill="#fbfbfb" stroke="#d0cdd0" strokeWidth=".8" />
    <path d="M16 25l1 12M20 25l-4 10" stroke="#6e9b4e" strokeWidth="1.300" />
    <circle cx="12" cy="20.500" r="3.800" fill="#b04a86" />
    <circle cx="18" cy="21" r="4.600" fill="#8f2c62" />
    <circle cx="14" cy="25" r="3.300" fill="#cf74a6" />
  </Free>
);

const GreyThumb = () => (
  <Free>
    <rect x="2.500" y="2" width="43" height="45" fill="#9d9c9e" />
    <rect x="2.500" y="2" width="43" height="3" fill="#e7e5e7" />
    <path d="M9 12h7M9 16h5M9 32h7M9 38h7M9 43h7M26 8h8M27 15h10M27 26h10" stroke="#77767a" strokeWidth="1.200" strokeDasharray="2 1" />
    <path d="M9 22.500h10" stroke="#f0f0f0" strokeWidth="1.800" />
    <rect x="31" y="32" width="15" height="15" rx="3" fill="#e9edf3" />
    <path d="M32.500 33.500h12v6h-12z" fill="#7ca6e6" />
    <path d="M32.500 39h12v6h-12z" fill="#27406d" />
    <path d="M38 42h8v4h-8z" fill="#c8c9cb" />
  </Free>
);

const FilmThumb = () => (
  <Free>
    <rect x="2" y="14" width="45" height="22" fill="#e9e6e7" />
    <rect x="2" y="16" width="35" height="19" fill="#050607" />
    <rect x="3" y="22" width="23" height="12.500" fill="#16566a" />
    <path d="M8 32l4-7 4 5 3-5" stroke="#5db4c4" fill="none" />
    <path d="M20 22v6l-3 6M20 27l4 7" stroke="#f5f0d8" strokeWidth="1.600" fill="none" />
    <rect x="27" y="22" width="11" height="5" fill="#eee" />
    <PagesTag />
  </Free>
);

const DocThumb = () => (
  <Free>
    <rect x="2" y="7" width="45" height="36.500" fill="#f1eff1" />
    <rect x="2" y="9" width="33" height="34.500" fill="#fff" />
    <path d="M7 14h22M7 17.500h20M7 21h22M7 28h22M7 31h22M7 34h18" stroke="#b2b1b5" strokeWidth="1" />
    <PagesTag />
  </Free>
);

const SheetThumb = ({ blank }: { blank?: boolean }) => (
  <Free>
    <rect x="2" y="9" width="45" height="30" fill="#eeecee" />
    <rect x="2" y="11.500" width="35" height="27.500" fill="#fefefe" />
    <path d="M4 12.500h5" stroke="#58a58c" strokeWidth="1.400" />
    {blank ? (
      <path d="M4 16h11" stroke="#8d9c98" strokeWidth="1.200" />
    ) : (
      <g>
        <path d="M4.500 16.500h31" stroke="#9a9a9e" strokeWidth="1.600" />
        <path d="M5 17v22M9 17v22M13 17v22M17.500 17v22M21.500 17v22M26 17v22M30 17v22M34.500 17v22" stroke="#b4b3b7" strokeWidth="1.300" />
        <path d="M5 20h30M5 24h30M5 28h30M5 32h30M5 36h30" stroke="#d8d7da" strokeWidth=".8" />
      </g>
    )}
    <path d="M39 15h5M39 20h4" stroke="#ccc9cc" />
    <NumbersTag />
  </Free>
);

const CodeThumb = ({ dark }: { dark?: boolean }) => (
  <Free>
    <rect x=".8" y="9" width="46.500" height="30" rx="1" fill="#0d0e10" />
    <rect x="2.800" y="11.500" width="42.500" height="25.500" fill={dark ? "#606266" : "#fdfdfd"} />
    <path
      d={dark ? "M3 14h40M3 17h38M3 20h26M32 20h12M3 24h28M3 27h40M3 30.500h24M12 34h20" : "M4 14h12M4 17h14M8 20h10M4 23.500h12M8 27h12M12 30.500h10M14 34h10"}
      stroke={dark ? "#e8e8ea" : "#6f7276"}
      strokeWidth="1.200"
      strokeDasharray="5 1"
    />
  </Free>
);

const Trash = () => (
  <Free>
    <path d="M8 8h32l-4.500 35q-1 3-4 3h-15q-3 0-4-3z" fill="#e6e5e6" stroke="#f6f6f6" strokeWidth="1.200" />
    <path d="M15 14l2 26M24 16v27M33 14l-2 26" stroke="#dbdadc" strokeWidth="3" />
    <path d="M8 9l5-6 5 3 6-4 5 3 6-2 5 6-6 3-8-2-9 2z" fill="#c7c8c9" />
    <path d="M12 8l4-3 2 4zM22 9l5-4 1 4zM31 6l5 1-3 3z" fill="#596b63" />
    <path d="M18 5l3 2-2 3zM28 4l4 2-4 3z" fill="#fff" />
    <path d="M25 10l3-3" stroke="#a65a57" strokeWidth="1.500" />
  </Free>
);

/* ---------- data ---------- */

const menus: [string, number][] = [
  ["File", 60], ["Edit", 63], ["View", 71], ["History", 91], ["Bookmarks", 125],
  ["Profiles", 94], ["Tab", 60], ["Window", 98], ["Help", 60],
];

type TabInfo = { icon?: React.ReactNode; title: string; w: number; fade?: boolean };
const tabs: TabInfo[] = [
  { icon: <GoogleG />, title: "flowers", w: 109.500, fade: true },
  { icon: <Canvas />, title: "Topic:", w: 109.500, fade: true },
  { icon: <ZoomMark />, title: "Launch", w: 109.500, fade: true },
  { icon: <ZoomMark />, title: "Launch", w: 109.500, fade: true },
  { icon: <ZoomMark />, title: "Launch", w: 109.500, fade: true },
  { title: "New Tab", w: 109.500 },
  { icon: <ZoomMark />, title: "Sign In", w: 109.500, fade: true },
  { icon: <ZoomMark />, title: "My Me", w: 108.100, fade: true },
  { icon: <WhatsApp />, title: "(70) W", w: 108.100, fade: true },
  { icon: <ZoomMark />, title: "My Me", w: 108.100, fade: true },
  { icon: <Gmail />, title: "Inbox (", w: 108.100, fade: true },
  { icon: <Gmail />, title: "Inbox (", w: 108.100, fade: true },
  { icon: <SfMark />, title: "Your s", w: 108.100, fade: true },
  { icon: <DocsMark />, title: "CMPE", w: 108.100, fade: true },
  { title: "New Tab", w: 108.100 },
];

type DockApp = { icon: React.ReactNode; running?: boolean; badge?: string };
const apps: DockApp[] = [
  { icon: <Finder />, running: true },
  { icon: <Launchpad /> },
  { icon: <Safari />, running: true },
  { icon: <Notes />, running: true },
  { icon: <Tv />, running: true, badge: "1" },
  { icon: <Music />, running: true },
  { icon: <Numbers />, running: true },
  { icon: <Pages />, running: true },
  { icon: <Settings />, running: true, badge: "1" },
  { icon: <VsCode />, running: true },
  { icon: <Chrome />, running: true },
  { icon: <Gearbox /> },
  { icon: <Terminal />, running: true },
  { icon: <Postman />, running: true },
  { icon: <Messages />, running: true },
  { icon: <Atom /> },
  { icon: <ZoomApp />, running: true },
  { icon: <Free><g transform="translate(3 3)"><Swirl size={42} /></g></Free>, running: true },
  { icon: <Excel />, running: true },
];
const recent: DockApp[] = [
  { icon: <MySql />, running: true },
  { icon: <Acrobat />, running: true },
  { icon: <TextEdit />, running: true },
  { icon: <Preview />, running: true },
  { icon: <Mail />, running: true, badge: "121,167" },
  { icon: <Xcode />, running: true },
];
const minimized: DockApp[] = [
  { icon: <FlowerThumb /> },
  { icon: <GreyThumb /> },
  { icon: <FilmThumb /> },
  { icon: <DocThumb /> },
  { icon: <SheetThumb /> },
  { icon: <SheetThumb blank /> },
  { icon: <SheetThumb /> },
  { icon: <SheetThumb /> },
  { icon: <SheetThumb /> },
  { icon: <SheetThumb /> },
  { icon: <CodeThumb dark /> },
  { icon: <CodeThumb /> },
  { icon: <Trash /> },
];

const communities = [
  { name: "Andys Software Engineering", inviteFocused: true },
  { name: "Andys SJSU", inviteFocused: false },
];

const DockGroup = ({ items }: { items: DockApp[] }) => (
  <>
    {items.map((app, i) => (
      <DockItem key={i}>
        {app.icon}
        {app.running && <RunningDot />}
        {app.badge && <Badge $wide={app.badge.length > 1}>{app.badge}</Badge>}
      </DockItem>
    ))}
  </>
);

const StripEnd = styled(Slot)`
  height: 48px;
`;

export default function App() {
  return (
    <Desktop>
      <Global />
      <MenuBar>
        <Slot $w={24}><AppleMark /></Slot>
        <Slot $w={27} />
        <MenuItem $w={101} $bold>Chrome</MenuItem>
        {menus.map(([label, w]) => (
          <MenuItem key={label} $w={w}>{label}</MenuItem>
        ))}
        <Extras>
          <Slot $w={50}><CameraExtra /></Slot>
          <Slot $w={49}><Swirl /></Slot>
          <Slot $w={50}><MdBluetooth size={24} /></Slot>
          <Slot $w={54}><Battery /></Slot>
          <Slot $w={58}><MdWifi size={26} /></Slot>
          <Slot $w={38}><SearchExtra /></Slot>
          <Slot $w={55}><ControlCenter /></Slot>
          <Slot $w={33}><Siri /></Slot>
          <Clock>Fri May 14  4:59 PM</Clock>
        </Extras>
      </MenuBar>

      <Window>
        <TabStrip>
          <Lights>
            <Light $c="#fb5f57" />
            <Light $c="#fcbb2f" />
            <Light $c="#29c941" />
          </Lights>
          <ActiveTab>
            <SnooTab />
            <TabTitle $w={26} $gap={12} $fade>Rec</TabTitle>
            <Slot $w={34}><MdClose size={20} color="#2b2d30" /></Slot>
          </ActiveTab>
          {tabs.map((t, i) => (
            <Tab key={i} $w={t.w}>
              {t.icon && <Slot $w={24}>{t.icon}</Slot>}
              <TabTitle $w={t.icon ? 54 : 85} $gap={t.icon ? 10.5 : 0} $fade={t.fade}>{t.title}</TabTitle>
              <TabDivider />
            </Tab>
          ))}
          <Tab $w={60}>
            <Slot $w={44}><MdAdd size={26} color="#3c4043" /></Slot>
          </Tab>
          <StripEnd $w={165}><StripMenu /></StripEnd>
        </TabStrip>

        <Toolbar>
          <Slot $w={46}><MdArrowBack size={26} /></Slot>
          <Slot $w={46}><MdArrowForward size={26} color="#b9bbbd" /></Slot>
          <Slot $w={45}><MdRefresh size={27} /></Slot>
          <Omnibox>
            <InfoMark />
            <Host>localhost</Host>
            <UrlPath>:3000/communitymoderation</UrlPath>
            <MdStarBorder size={25} />
          </Omnibox>
          <Slot $w={45.6}><MaskExt /></Slot>
          <Slot $w={45.6}><WaveExt /></Slot>
          <Slot $w={45.6}><ExtStack><PlayExt /><NewBadge>NEW</NewBadge></ExtStack></Slot>
          <Slot $w={45.6}><ExtStack><HexExt /><NewBadge>NEW</NewBadge></ExtStack></Slot>
          <Slot $w={45.6}><OrbitExt /></Slot>
          <Slot $w={45.6}><MdExtension size={25} /></Slot>
          <Slot $w={45.6}><Portrait /></Slot>
          <Slot $w={45.6}><MdMoreVert size={27} /></Slot>
        </Toolbar>

        <Page>
          <SiteHeader>
            <RedditLogo />
            <Wordmark>redd<DottedI>i</DottedI>t</Wordmark>
            <HeaderIcons>
              <ShieldSlot $w={63}><Shield /></ShieldSlot>
              <Slot $w={68}><MdQuestionAnswer size={28.4} /></Slot>
              <Slot $w={68}><MdAssessment size={28.4} /></Slot>
              <Slot $w={68}><MdCheck size={28.4} /></Slot>
              <Slot $w={68}><MdSearch size={28.4} /></Slot>
              <Profile>
                <Initial>A</Initial>
                <ProfileArrow />
              </Profile>
            </HeaderIcons>
          </SiteHeader>

          <Content>
            <Button $w={69.5}>2<Caret /></Button>
            <Heading>Your Community</Heading>
            <SearchInput placeholder="Search Community Name" />
            {communities.map((c) => (
              <Card key={c.name}>
                <CommunityAvatar />
                <CardBody>
                  <CardTitle>{c.name}</CardTitle>
                  <CardMeta>submitted on May 14, 2021 by andy@gmail.com</CardMeta>
                  <Actions $gap={13}>
                    <Button $w={131}>Approve</Button>
                    <Button $w={104} $focus={c.inviteFocused}>Invite</Button>
                  </Actions>
                </CardBody>
              </Card>
            ))}
            <Pager>
              <Button $w={89.5}>Next</Button>
              <Button $w={133.5}>Previous</Button>
            </Pager>
          </Content>
        </Page>

        <Shelf>
          <Download $active><JpegFile /><FileName $inset={66}>flower2.jpeg</FileName><Chevron /></Download>
          <ShelfDivider />
          <Download><JpegFile /><FileName $inset={68}>flower1.jpeg</FileName><Chevron /></Download>
          <ShelfDivider />
          <ShowAll>Show All</ShowAll>
          <Slot $w={24}><MdClose size={21} color="#5f6164" /></Slot>
          <Slot $w={14} />
        </Shelf>
      </Window>

      <Under>
        <Dock>
          <Paints />
          <DockGroup items={apps} />
          <DockDivider />
          <DockGroup items={recent} />
          <DockDivider />
          <DockGroup items={minimized} />
        </Dock>
      </Under>
    </Desktop>
  );
}
